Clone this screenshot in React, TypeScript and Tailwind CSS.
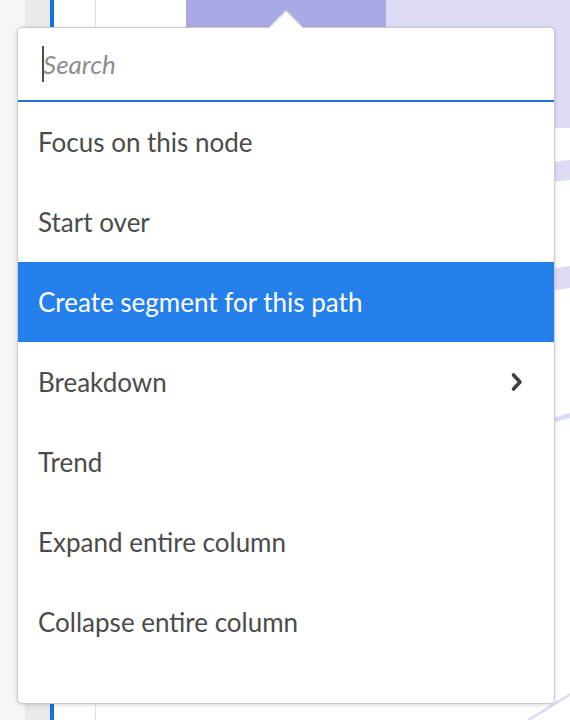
import React from "react";

const items = [
  "Focus on this node",
  "Start over",
  "Create segment for this path",
  "Breakdown",
  "Trend",
  "Expand entire column",
  "Collapse entire column",
];

export default function App() {
  return (
    <div
      className="relative w-[570px] h-[720px] overflow-hidden bg-white flex"
      style={{ fontFamily: 'Lato, "Open Sans", sans-serif' }}
    >
      <div className="w-[25px] bg-[#f5f5f5]" />
      <div className="w-[25px] bg-[#e9e9e9]" />
      <div className="w-[4px] bg-[#1473e6]" />
      <div className="w-[41px] bg-white" />
      <div className="w-px bg-[#e1e1e1]" />
      <div className="w-[90px] bg-white" />
      <div className="flex-1 relative flex flex-col">
        <div className="h-[128px] flex">
          <div className="w-[200px] bg-[#a9a9e6]" />
          <div className="flex-1 bg-[#dcdcf6]" />
        </div>
        <svg className="flex-1 w-full" viewBox="0 0 384 592" preserveAspectRatio="none">
          <path d="M300 42 L384 32 L384 52 L300 62 Z" fill="#dcdcf6" />
          <path d="M300 150 L384 138 L384 160 L300 172 Z" fill="#dcdcf6" />
          <path d="M300 308 L384 285 L384 290 L300 313 Z" fill="#dcdcf6" />
          <path d="M340 592 L384 565 L384 568 L345 592 Z" fill="#dcdcf6" />
        </svg>
      </div>

      {/* menu overlay */}
      <div className="absolute left-[17px] top-[27px] w-[538px] h-[677px] bg-white border border-[#cacaca] rounded-[5px] shadow-[0_1px_4px_rgba(0,0,0,0.15)] flex flex-col">
        <div className="absolute left-[256px] top-[-13px] w-[24px] h-[24px] rotate-45 bg-white border-l border-t border-[#c8c8c8]" />
        <div className="relative h-[74px] flex items-center pl-[24px] border-b-2 border-[#1f73d6]">
          <div className="w-[2px] h-[36px] bg-[#4b4b4b]" />
          <span className="text-[26px] italic text-[#8e8e8e] leading-none -ml-px">Search</span>
        </div>
        <div className="flex flex-col">
          {items.map((t, i) => (
            <div
              key={t}
              className={
                i === 2
                  ? "h-[80px] flex items-center px-[20px] bg-[#2680eb] text-white"
                  : "h-[80px] flex items-center px-[20px] text-[#4b4b4b]"
              }
            >
              <span className="text-[26px] leading-none flex-1">{t}</span>
              {t === "Breakdown" && (
                <svg width="14" height="20" viewBox="0 0 14 20" className="mr-[10px]">
                  <path d="M3.5 3 L10 10 L3.5 17" fill="none" stroke="#3f3f3f" strokeWidth="3.6" strokeLinecap="round" strokeLinejoin="round" />
                </svg>
              )}
            </div>
          ))}
        </div>
      </div>
    </div>
  );
}
